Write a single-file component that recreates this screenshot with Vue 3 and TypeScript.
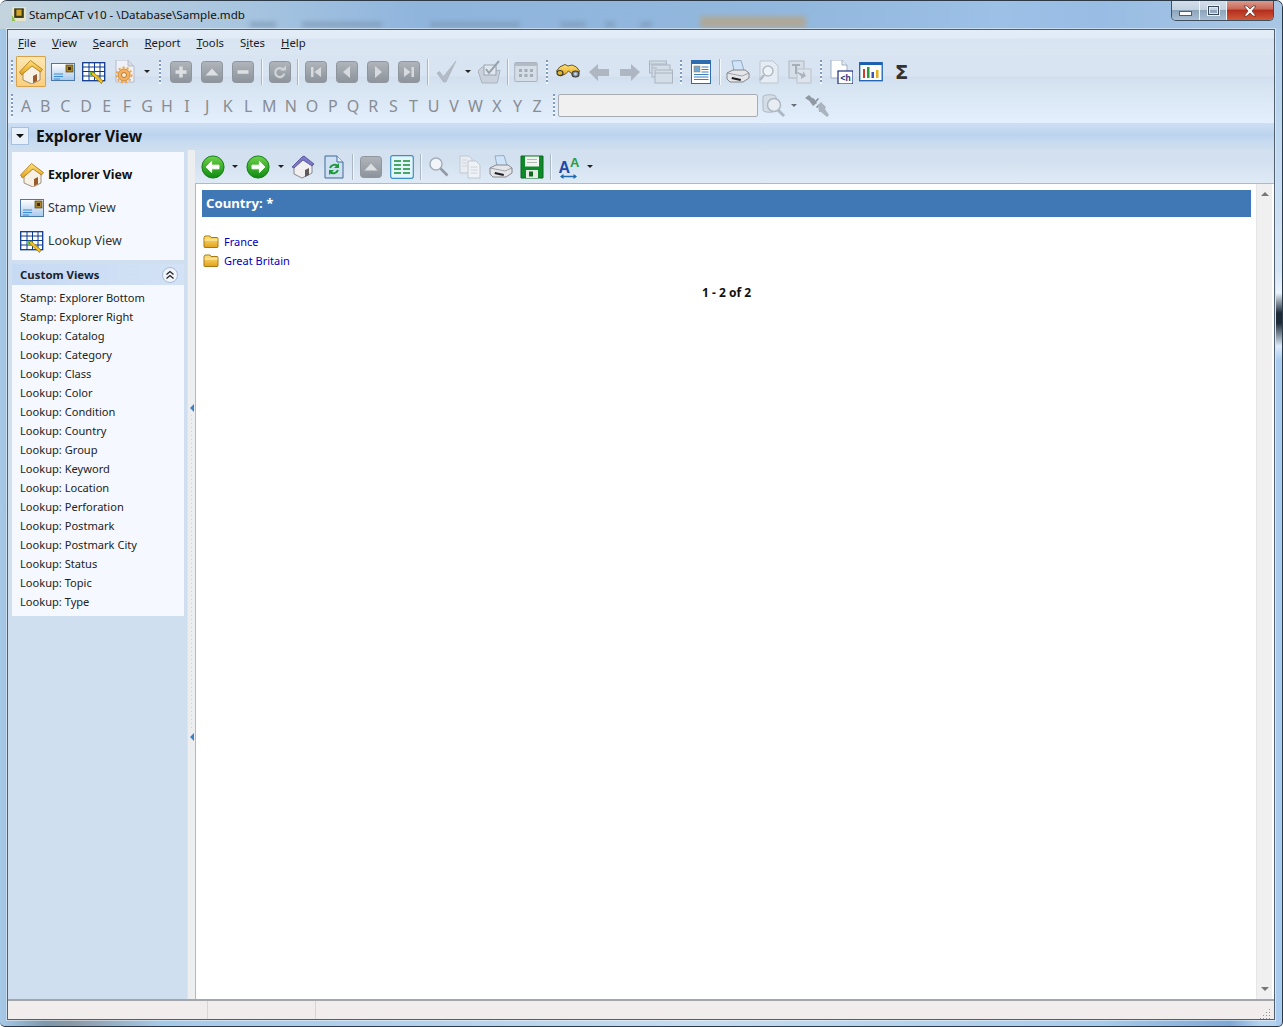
<script setup lang="ts">
type Item = { k: 'btn' | 'sep' | 'grip' | 'arrow'; i?: string; w: number; on?: boolean; sel?: boolean };
const b = (i: string, w = 31, sel = false): Item => ({ k: 'btn', i, w, sel });
const s = (w: number): Item => ({ k: 'sep', w });
const g = (w: number): Item => ({ k: 'grip', w });
const a = (w: number): Item => ({ k: 'arrow', w });

const toolbarOne: Item[] = [
  b('home', 30, true), b('stamp'), b('lookup'), b('settings'), a(14), g(11),
  b('plus'), b('up'), b('minus'), s(6), b('refresh'), s(5),
  b('first'), b('prev'), b('next'), b('last'), s(7),
  b('check'), a(12), b('checkbox'), s(5), b('calendar'), g(11),
  b('binoculars'), b('left'), b('right'), b('windows'), g(9),
  b('doc'), s(6), b('printer'), b('preview'), b('copyrep'), g(11),
  b('doch', 30), b('chart', 30), b('sigma')
];
const toolbarRight: Item[] = [
  b('back', 28), a(16), b('forward', 30), a(15), b('home2', 30), b('docsync'), s(6),
  b('up'), b('list'), s(6), b('glass'), b('copy'), b('printer'), b('save'), s(6), b('font', 34), a(6)
];
const menus = [
  { pre: '', u: 'F', post: 'ile' }, { pre: '', u: 'V', post: 'iew' }, { pre: '', u: 'S', post: 'earch' },
  { pre: '', u: 'R', post: 'eport' }, { pre: '', u: 'T', post: 'ools' }, { pre: 'S', u: 'i', post: 'tes' },
  { pre: '', u: 'H', post: 'elp' }
];
const letterWidths = [19, 19.5, 20.5, 21, 20.5, 20, 20, 20, 20, 20.5, 20.5, 20.5, 21.5, 21.5, 21, 20.5, 20, 20.5, 20, 20, 20, 21, 22, 21, 20, 19];
const letters = 'ABCDEFGHIJKLMNOPQRSTUVWXYZ'.split('').map((l, n) => ({ l, w: letterWidths[n] }));
const views = [
  { label: 'Explorer View', icon: 'home', bold: true },
  { label: 'Stamp View', icon: 'stamp', bold: false },
  { label: 'Lookup View', icon: 'lookup', bold: false }
];
const customViews = [
  'Stamp: Explorer Bottom', 'Stamp: Explorer Right', 'Lookup: Catalog', 'Lookup: Category', 'Lookup: Class',
  'Lookup: Color', 'Lookup: Condition', 'Lookup: Country', 'Lookup: Group', 'Lookup: Keyword', 'Lookup: Location',
  'Lookup: Perforation', 'Lookup: Postmark', 'Lookup: Postmark City', 'Lookup: Status', 'Lookup: Topic', 'Lookup: Type'
];
const folders = ['France', 'Great Britain'];
</script>

<template>
  <svg class="defs" aria-hidden="true">
    <defs>
      <linearGradient id="gb" x1="0" y1="0" x2="0" y2="1"><stop offset="0" stop-color="#b0b5bb" /><stop offset="1" stop-color="#8c939b" /></linearGradient>
      <linearGradient id="gg" x1="0" y1="0" x2="0" y2="1"><stop offset="0" stop-color="#6fd24a" /><stop offset="1" stop-color="#0f8a12" /></linearGradient>
      <linearGradient id="gy" x1="0" y1="0" x2="0" y2="1"><stop offset="0" stop-color="#ffe27a" /><stop offset="1" stop-color="#e2a21c" /></linearGradient>
      <linearGradient id="gs" x1="0" y1="0" x2="0" y2="1"><stop offset="0" stop-color="#ffffff" /><stop offset="1" stop-color="#a9c9ec" /></linearGradient>
    </defs>
    <symbol id="i-home" viewBox="0 0 24 24">
      <path d="M4 12v8l9 4 8-4v-9l-8-6z" fill="#f6f1e4" stroke="#8a7a60" stroke-width=".8" />
      <path d="M0.500 12 11.500 .5l12 9-2 2.500-8.500-6-10.500 9z" fill="url(#gy)" stroke="#a87412" stroke-width=".8" />
      <path d="M14 16l4-2v7l-4 2z" fill="#9a5a2a" />
    </symbol>
    <symbol id="i-stamp" viewBox="0 0 24 24">
      <rect x=".5" y="3.500" width="23" height="17" fill="url(#gs)" stroke="#4a78a8" />
      <rect x="15" y="5" width="7" height="7" fill="#a88428" stroke="#54400f" stroke-width=".7" />
      <rect x="17" y="7" width="3" height="3" fill="#3a2c0a" />
      <path d="M3 14h9M3 16.500h9M3 19h6" stroke="#3d8ed0" />
    </symbol>
    <symbol id="i-lookup" viewBox="0 0 24 24">
      <rect x=".7" y="2.700" width="22" height="18" fill="#fff" stroke="#0f3a8c" stroke-width="1.300" />
      <path d="M1 7h22M1 11.500h22M1 16h22M7 3v18M12.500 3v18M18 3v18" stroke="#0f3a8c" />
      <rect x="7.500" y="11.800" width="5" height="4" fill="#69c04a" />
      <path d="M11 12l10 9-1.500 2.500L9 14z" fill="#f2c21e" stroke="#8c6a08" stroke-width=".7" />
    </symbol>
    <symbol id="i-settings" viewBox="0 0 24 24">
      <path d="M3 0h12l6 6v16H3z" fill="#eef1f7" stroke="#b5bcc8" />
      <path d="M15 0v6h6" fill="#d5dae4" stroke="#b5bcc8" />
      <circle cx="11" cy="15" r="6" fill="#f4b05e" stroke="#d08a3a" />
      <circle cx="11" cy="15" r="7.500" fill="none" stroke="#eca556" stroke-width="2" stroke-dasharray="2.200 2" />
      <circle cx="11" cy="15" r="2.500" fill="#fbeed8" stroke="#b87a34" />
    </symbol>
    <symbol id="i-plus" viewBox="0 0 24 24"><rect x="1.500" y="1.500" width="21" height="21" rx="3" fill="url(#gb)" stroke="#8f959c" /><path d="M12 6.500v11M6.500 12h11" stroke="#dde0e3" stroke-width="3.400" /></symbol>
    <symbol id="i-up" viewBox="0 0 24 24"><rect x="1.500" y="1.500" width="21" height="21" rx="3" fill="url(#gb)" stroke="#8f959c" /><path d="M5.500 15.500 12 8.500l6.500 7z" fill="#dde0e3" /></symbol>
    <symbol id="i-minus" viewBox="0 0 24 24"><rect x="1.500" y="1.500" width="21" height="21" rx="3" fill="url(#gb)" stroke="#8f959c" /><path d="M6.500 12h11" stroke="#dde0e3" stroke-width="3.400" /></symbol>
    <symbol id="i-refresh" viewBox="0 0 24 24"><rect x="1.500" y="1.500" width="21" height="21" rx="3" fill="url(#gb)" stroke="#8f959c" /><path d="M15.500 10a4.500 4.500 0 1 0 .7 3.500" fill="none" stroke="#cfd3d8" stroke-width="2.300" /><path d="M12.500 10.500h5.500V5.500z" fill="#cfd3d8" /></symbol>
    <symbol id="i-first" viewBox="0 0 24 24"><rect x="1.500" y="1.500" width="21" height="21" rx="3" fill="url(#gb)" stroke="#8f959c" /><path d="M7 7h2.500v10H7zM17 7v10l-6.500-5z" fill="#d6d9dd" /></symbol>
    <symbol id="i-prev" viewBox="0 0 24 24"><rect x="1.500" y="1.500" width="21" height="21" rx="3" fill="url(#gb)" stroke="#8f959c" /><path d="M15 6v12l-7-6z" fill="#d6d9dd" /></symbol>
    <symbol id="i-next" viewBox="0 0 24 24"><rect x="1.500" y="1.500" width="21" height="21" rx="3" fill="url(#gb)" stroke="#8f959c" /><path d="M9 6v12l7-6z" fill="#d6d9dd" /></symbol>
    <symbol id="i-last" viewBox="0 0 24 24"><rect x="1.500" y="1.500" width="21" height="21" rx="3" fill="url(#gb)" stroke="#8f959c" /><path d="M17 7h-2.500v10H17zM7 7v10l6.500-5z" fill="#d6d9dd" /></symbol>
    <symbol id="i-check" viewBox="0 0 24 24"><path d="M2 13l2.500-1.500 4 5L21 1l-10 21H8.500z" fill="#b3bbc4" stroke="#a2abb5" stroke-width=".5" /></symbol>
    <symbol id="i-checkbox" viewBox="0 0 24 24"><path d="M4 7h14v4l4-1-2 10-1 3H4L0 11z" fill="#c9d2dc" stroke="#a9b3be" /><rect x="6" y="5" width="12" height="10" fill="#e0e7ef" stroke="#9ba6b2" /><path d="M8 9l3 4 10-12" fill="none" stroke="#97a2ae" stroke-width="2" /></symbol>
    <symbol id="i-calendar" viewBox="0 0 24 24"><rect x=".7" y="2.500" width="22.500" height="19" rx="1" fill="#d5dde6" stroke="#aab3bd" /><rect x="1" y="3" width="22" height="3" fill="#b3bcc6" /><path d="M5 9h3v3H5zM10.500 9h3v3h-3zM16 9h3v3h-3zM5 14h3v3H5zM10.500 14h3v3h-3zM16 14h3v3h-3z" fill="#a2adb9" /></symbol>
    <symbol id="i-binoculars" viewBox="0 0 24 24"><path d="M0.500 11Q3 6 9 4.500l3 1.500 4-1q5 1 7.500 6l-2 5-6-2.500-3-2.500-3 3-5 2z" fill="url(#gy)" stroke="#5a4710" stroke-width=".9" /><ellipse cx="4" cy="13" rx="3" ry="2.500" fill="#e2b52c" stroke="#3a3a34" stroke-width="1.200" /><ellipse cx="19.500" cy="14" rx="3.500" ry="3" fill="#7a8aa2" stroke="#3a3a34" stroke-width="1.200" /><circle cx="19.500" cy="14" r="1.400" fill="#ccd8ea" /></symbol>
    <symbol id="i-left" viewBox="0 0 24 24"><path d="M2 12l9-8v5h11v7H11v5z" fill="#aeb7c1" /></symbol>
    <symbol id="i-right" viewBox="0 0 24 24"><path d="M22 12l-9-8v5H2v7h11v5z" fill="#aeb7c1" /></symbol>
    <symbol id="i-windows" viewBox="0 0 24 24"><g fill="#d3dde8" stroke="#aab5c1"><rect x=".5" y="1" width="17" height="12" /><rect x="3" y="5" width="18" height="12" /><rect x="6" y="10" width="17.500" height="13" /></g><path d="M6 13h17.500M3 8h5M1 4h16" stroke="#aab5c1" /></symbol>
    <symbol id="i-doc" viewBox="0 0 24 24"><rect x="2.500" y=".5" width="19" height="23" fill="#fff" stroke="#2d6cae" /><rect x="3" y="1" width="18" height="3" fill="#2d6cae" /><rect x="5" y="6" width="6" height="6" fill="#6ea5d6" stroke="#a8884a" stroke-width=".6" /><path d="M12.500 7h7M12.500 9.500h7M12.500 12h7M5 14.500h14.500M5 17h14.500M5 19.500h14.500" stroke="#3c7fc0" /></symbol>
    <symbol id="i-printer" viewBox="0 0 24 24"><path d="M6 1l9-.5 3 10H8z" fill="#cfe4f8" stroke="#7a93ae" stroke-width=".7" /><path d="M1 13l6-3h12l4 3v5l-6 4H4l-3-3z" fill="#e4e6ea" stroke="#6e6e72" stroke-width=".8" /><path d="M1 13l15 3 7-3" fill="none" stroke="#8e9095" stroke-width=".8" /><path d="M6 17l9 2-.5 2-9-2z" fill="#1e1e22" /></symbol>
    <symbol id="i-preview" viewBox="0 0 24 24"><path d="M3 1h13l5 5v17H3z" fill="#e6ecf3" stroke="#bdc6d0" /><circle cx="11" cy="11" r="5" fill="#eef3f8" stroke="#b1bbc6" stroke-width="1.500" /><path d="M7 15l-4 5" stroke="#b1bbc6" stroke-width="2.500" /></symbol>
    <symbol id="i-copyrep" viewBox="0 0 24 24"><rect x="1" y="1" width="15" height="17" fill="#d6dee7" stroke="#aeb8c3" /><rect x="9" y="9" width="14" height="14" fill="#dde4ec" stroke="#bac3cd" /><path d="M4 4h8v2H9v8H7V6H4z" fill="#a5afba" /><path d="M7 11l8 3v-3l3 5-5 3v-3z" fill="#aab3be" /></symbol>
    <symbol id="i-chart" viewBox="0 0 24 24"><rect x=".7" y="2.700" width="22.500" height="18" fill="#fff" stroke="#1a5fb0" stroke-width="1.300" /><rect x="1" y="3" width="22" height="2" fill="#1a5fb0" /><path d="M4 9h2v9H4z" fill="#d63b2b" /><path d="M8 7h2.500v11H8z" fill="#2e9b3a" /><path d="M12.500 12H15v6h-2.500z" fill="#3c53b4" /><path d="M17 10h2.500v8H17z" fill="#e1b01c" /></symbol>
    <symbol id="i-back" viewBox="0 0 26 26"><circle cx="13" cy="13" r="12" fill="url(#gg)" stroke="#0d7a14" /><path d="M5.500 13l6-6v4h8v4h-8v4z" fill="#fff" stroke="#fff" stroke-linejoin="round" /></symbol>
    <symbol id="i-forward" viewBox="0 0 26 26"><circle cx="13" cy="13" r="12" fill="url(#gg)" stroke="#0d7a14" /><path d="M20.500 13l-6-6v4h-8v4h8v4z" fill="#fff" stroke="#fff" stroke-linejoin="round" /></symbol>
    <symbol id="i-home2" viewBox="0 0 24 24"><path d="M3 11v8l8 4 10-5v-8l-8-6z" fill="#f1efef" stroke="#6e6e78" stroke-width=".8" /><path d="M1 12 11 2l2-1 10 8-2 2-9-6-9 8z" fill="#7c79c9" stroke="#4d4a94" stroke-width=".8" /><path d="M14 15l4-2v7l-4 2z" fill="#605a5a" /></symbol>
    <symbol id="i-docsync" viewBox="0 0 24 24"><path d="M3 1h12l6 6v16H3z" fill="#cfe0f3" stroke="#3f6a9a" /><path d="M15 1v6h6" fill="#e6f0fa" stroke="#3f6a9a" /><path d="M8 13a5 5 0 0 1 8-2" fill="none" stroke="#1e9a3a" stroke-width="2" /><path d="M17 8v5h-5z" fill="#1e9a3a" /><path d="M16 15a5 5 0 0 1-8 2" fill="none" stroke="#1e9a3a" stroke-width="2" /><path d="M7 20v-5h5z" fill="#1e9a3a" /></symbol>
    <symbol id="i-list" viewBox="0 0 24 24"><rect x=".7" y=".7" width="22.600" height="22.600" rx="2" fill="#e2f5fa" stroke="#3d8fc4" stroke-width="1.200" /><path d="M4 6h7M13 6h7M4 10h7M13 10h7M4 14h7M13 14h7M4 18h7M13 18h7" stroke="#198a3a" stroke-width="1.500" /></symbol>
    <symbol id="i-glass" viewBox="0 0 24 24"><circle cx="9" cy="9" r="6" fill="#f2f6fb" stroke="#a6afb9" stroke-width="1.500" /><path d="M13.500 13.500l7 7" stroke="#8f98a3" stroke-width="2.500" /></symbol>
    <symbol id="i-copy" viewBox="0 0 24 24"><path d="M2 1h9l3 3v14H2z" fill="#e9edf2" stroke="#c0c8d1" /><path d="M10 6h8l4 4v13H10z" fill="#eef1f5" stroke="#c0c8d1" /><path d="M12.500 12h7M12.500 15h7M12.500 18h7M4 5h5M4 8h5M4 11h5" stroke="#cfd6de" /></symbol>
    <symbol id="i-save" viewBox="0 0 24 24"><path d="M1 1h22v22H1z" fill="#0f8a2a" stroke="#0a6a1e" /><rect x="5" y="1.500" width="14" height="10" fill="#f2f4f2" /><path d="M7 4.500h10M7 7.500h10" stroke="#b3bab3" /><rect x="6" y="15" width="12" height="8" fill="#e6ebe6" /><rect x="9" y="16.500" width="4" height="5" fill="#0f6a1e" /></symbol>
    <symbol id="i-dbsearch" viewBox="0 0 24 24"><path d="M1 3c0-3 13-3 13 0v13c0 3-13 3-13 0z" fill="#d5dde6" stroke="#aeb8c3" /><circle cx="12" cy="11" r="6.500" fill="#e7edf3" stroke="#aeb8c3" stroke-width="1.500" /><path d="M16 16l6 6" stroke="#aeb8c3" stroke-width="3" /></symbol>
    <symbol id="i-plug" viewBox="0 0 24 24"><path d="M0 4l4-3 3 3 2 .5L12 9l-4 3-2.500-3.500L4.500 7z" fill="#8f99a4" /><path d="M10 7l3-3 1 1-3 3zM11 13l3-3 1 1-3 3z" fill="#7f8994" /><path d="M13 11l3-3 5 5-1 2 4 6-2 2-6-5-2 0z" fill="#aab4bf" /></symbol>
    <symbol id="i-folder" viewBox="0 0 16 16"><path d="M1 3.500 2 2h5l1 1.500h6.500l.5 1V13l-.5.5h-13L1 13z" fill="url(#gy)" stroke="#a57a14" /><path d="M1.500 6h13" stroke="#fff3c0" /></symbol>
  </svg>

  <div class="window">
    <header class="titlebar">
      <span class="smudges" aria-hidden="true"></span>
      <svg class="appicon" viewBox="0 0 16 16"><rect width="16" height="16" fill="#e8e4c8" /><path d="M0 16V9l4 7z" fill="#8fc04a" /><rect x="2.500" y="1.500" width="11" height="11" fill="#3a3a1c" /><rect x="5" y="3" width="6" height="7" fill="#d2a52a" /></svg>
      <span class="apptitle">StampCAT v10 - \Database\Sample.mdb</span>
      <div class="caption">
        <span class="cap cap-min"><i></i></span>
        <span class="cap cap-max"><i></i></span>
        <span class="cap cap-close">
          <svg viewBox="0 0 14 12" width="14" height="12"><path d="M1 1h3l3 3 3-3h3L9 6l4 5h-3L7 8l-3 3H1l4-5z" fill="#fff" stroke="#5a2a24" stroke-width=".7" /></svg>
        </span>
      </div>
    </header>

    <div class="client">
      <nav class="menubar">
        <span v-for="m in menus" :key="m.u + m.post" class="menu">{{ m.pre }}<u>{{ m.u }}</u>{{ m.post }}</span>
      </nav>

      <div class="tb tb-one">
        <span class="grip grip-first"></span>
        <template v-for="(it, n) in toolbarOne" :key="n">
          <span v-if="it.k === 'btn'" class="btn" :class="{ sel: it.sel }" :style="{ width: it.w + 'px' }">
            <span v-if="it.i === 'sigma'" class="sigma">Σ</span>
            <svg v-else-if="it.i === 'doch'" class="ico" viewBox="0 0 24 24">
              <path d="M2 0h11l5 5v13H2z" fill="#fff" stroke="#9fb0c2" /><path d="M13 0v5h5" fill="#e6edf5" stroke="#9fb0c2" />
              <rect x="9" y="11" width="15" height="13" fill="#fff" stroke="#1b2f7c" stroke-width="1.200" />
              <text x="16.500" y="21" font-size="8.500" font-weight="700" text-anchor="middle" fill="#1b2f7c" font-family="Liberation Sans, sans-serif">&lt;h</text>
            </svg>
            <svg v-else class="ico"><use :href="'#i-' + it.i" /></svg>
          </span>
          <span v-else-if="it.k === 'sep'" class="slot" :style="{ width: it.w + 'px' }"><i class="sep"></i></span>
          <span v-else-if="it.k === 'grip'" class="slot" :style="{ width: it.w + 'px' }"><i class="grip"></i></span>
          <span v-else class="slot" :style="{ width: it.w + 'px' }"><i class="arrow"></i></span>
        </template>
      </div>

      <div class="tb tb-two">
        <span class="grip grip-first"></span>
        <span v-for="c in letters" :key="c.l" class="letter" :style="{ width: c.w + 'px' }">{{ c.l }}</span>
        <span class="grip grip-search"></span>
        <input class="search" type="text" />
        <svg class="ico ico-db"><use href="#i-dbsearch" /></svg>
        <i class="arrow arrow-db"></i>
        <svg class="ico ico-plug"><use href="#i-plug" /></svg>
      </div>

      <div class="viewhead">
        <span class="viewbtn"><i class="arrow arrow-dark"></i></span>
        <span class="viewtitle">Explorer View</span>
      </div>

      <main class="main">
        <aside class="side">
          <div class="panel">
            <div v-for="v in views" :key="v.label" class="view" :class="{ bold: v.bold }">
              <svg class="ico"><use :href="'#i-' + v.icon" /></svg>
              <span>{{ v.label }}</span>
            </div>
          </div>
          <div class="sechead">
            <span>Custom Views</span>
            <span class="collapse">
              <svg viewBox="0 0 10 10" width="10" height="10"><path d="M1.500 4.500 5 1.500l3.500 3M1.500 8.500 5 5.500l3.500 3" fill="none" stroke="#222" stroke-width="1.300" /></svg>
            </span>
          </div>
          <ul class="customs">
            <li v-for="c in customViews" :key="c">{{ c }}</li>
          </ul>
        </aside>

        <div class="splitter">
          <div class="handle"><i class="tri"></i><span class="dots"></span><i class="tri"></i></div>
        </div>

        <section class="pane">
          <div class="tb tb-right">
            <template v-for="(it, n) in toolbarRight" :key="n">
              <span v-if="it.k === 'btn'" class="btn" :style="{ width: it.w + 'px' }">
                <svg v-if="it.i === 'font'" class="ico" viewBox="0 0 24 24">
                  <text x="12" y="12" font-size="13" font-weight="700" fill="#2a9d3a" font-family="Liberation Sans, sans-serif">A</text>
                  <text x=".5" y="18" font-size="16" font-weight="700" fill="#1d4aa8" font-family="Liberation Sans, sans-serif">A</text>
                  <path d="M3 21.500h15" stroke="#1d6ab0" stroke-width="1.300" /><path d="M5.500 19v5L2 21.500zM15.500 19v5l3.500-2.500z" fill="#1d6ab0" />
                </svg>
                <svg v-else class="ico ico-r"><use :href="'#i-' + it.i" /></svg>
              </span>
              <span v-else-if="it.k === 'sep'" class="slot" :style="{ width: it.w + 'px' }"><i class="sep sep-r"></i></span>
              <span v-else class="slot" :style="{ width: it.w + 'px' }"><i class="arrow"></i></span>
            </template>
          </div>
          <div class="contentwrap">
            <div class="content">
              <h1 class="banner">Country: *</h1>
              <div class="folders">
                <div v-for="f in folders" :key="f" class="folder">
                  <svg class="fico"><use href="#i-folder" /></svg>
                  <a>{{ f }}</a>
                </div>
              </div>
              <p class="count">1 - 2 of 2</p>
            </div>
            <div class="scrollbar">
              <i class="sb-up"></i>
              <i class="sb-down"></i>
            </div>
          </div>
        </section>
      </main>

      <footer class="status">
        <span class="st st-a"></span>
        <span class="st st-b"></span>
        <span class="st st-c">
          <svg class="sgrip" viewBox="0 0 11 11" width="11" height="11"><path d="M9 1h1v1H9zM9 4h1v1H9zM6 4h1v1H6zM9 7h1v1H9zM6 7h1v1H6zM3 7h1v1H3zM9 10h1v1H9zM6 10h1v1H6zM3 10h1v1H3zM0 10h1v1H0z" fill="#8f9298" /></svg>
        </span>
      </footer>
    </div>
  </div>
</template>

<style>
html, body { margin: 0; background: #fff; overflow: hidden; }
</style>

<style scoped>
.defs { position: absolute; width: 0; height: 0; }
.window {
  box-sizing: border-box; width: 1283px; height: 1027px; padding: 0 7px 7px 7px; position: relative; overflow: hidden;
  border-radius: 7px 7px 5px 5px; border: 1px solid #2c3a48; border-width: 1px 1px 1px 0;
  font-family: "Noto Sans", "Liberation Sans", sans-serif; font-size: 11.200px; color: #1c1c1c;
  background:
    linear-gradient(180deg, #a9c9e8 0, #d6e6f6 270px, #eaf3fc 292px, #1d2a38 312px, #1d2a38 322px, #dcebfa 345px, #a8cbee 360px, #a8cbee 100%) right top / 6px 100% no-repeat,
    linear-gradient(90deg, #a7c9e8 0, #7e98ad 45px, #8a98a4 70px, #a7c9e8 160px, #b3d0ec 400px, #c5dcf0 700px, #a9cbeb 1100px, #7ea8d6 1230px, #b4d2ee 1260px);
}
.titlebar { height: 28px; margin: 0 -7px; padding: 0 0 2px 12px; box-sizing: border-box; display: flex; align-items: center; position: relative;
  background: linear-gradient(90deg, #c3d4dd 0, #a9c6e0 230px, #8fb5dd 420px, #92b8de 800px, #9cc0e6 1000px, #98bce3 1100px, #a9c7e4 1283px); }
.smudges { position: absolute; left: 240px; top: 12px; width: 600px; height: 16px; filter: blur(2.500px); opacity: .85;
  background:
    linear-gradient(#b3a68f, #b3a68f) 460px 3px / 106px 12px no-repeat,
    linear-gradient(#7f9ab8, #7f9ab8) 10px 9px / 26px 5px no-repeat,
    linear-gradient(#7f9ab8, #7f9ab8) 62px 9px / 80px 5px no-repeat,
    linear-gradient(#7f9ab8, #7f9ab8) 190px 9px / 90px 5px no-repeat,
    linear-gradient(#7f9ab8, #7f9ab8) 320px 9px / 26px 5px no-repeat,
    linear-gradient(#7f9ab8, #7f9ab8) 365px 9px / 10px 5px no-repeat,
    linear-gradient(#7f9ab8, #7f9ab8) 400px 9px / 12px 5px no-repeat; }
.appicon { width: 14px; height: 14px; margin-right: 3px; position: relative; }
.apptitle { font-size: 11.600px; color: #111; position: relative; }
.caption { position: absolute; right: 8px; top: 0; height: 19px; display: flex; border: 1px solid #3e4f60; border-top: 0; border-radius: 0 0 5px 5px; overflow: hidden; }
.cap { display: flex; align-items: center; justify-content: center; height: 19px; background: linear-gradient(180deg, #d3dee9 0, #c3d2e0 45%, #8ea4bb 50%, #a9bfd4 100%); border-right: 1px solid #eef4fa; }
.cap-min { width: 27px; } .cap-max { width: 26px; }
.cap-min i { width: 11px; height: 3px; background: #fff; border: 1px solid #50606f; margin-top: 6px; }
.cap-max i { width: 9px; height: 7px; border: 1px solid #3a4755; box-shadow: inset 0 0 0 1px #dfe8f0, 0 0 0 1px #eaf0f6; }
.cap-close { width: 46px; border: 0; background: linear-gradient(180deg, #dc9a8c 0, #ca6a58 40%, #b52f1e 50%, #cf5a3a 100%); }

.client { box-sizing: border-box; height: 991px; display: flex; flex-direction: column; border: 1px solid #50606f; box-shadow: 0 0 0 1px rgba(255,255,255,.45); background: #d5e2f0; overflow: hidden; position: relative; }
.menubar { height: 25px; flex: none; display: flex; align-items: center; padding-left: 10px; gap: 16px; box-sizing: border-box; padding-bottom: 1px;
  background: linear-gradient(180deg, #e3edf8 0, #e1ebf6 8px, #d8e4f1 9px, #dae6f2 100%); }
.menu { font-size: 11.300px; white-space: nowrap; }
.tb { display: flex; align-items: center; box-sizing: border-box; flex: none; }
.tb-one { height: 33px; padding-left: 3px; background: linear-gradient(180deg, #d8e4f1 0, #d8e4f1 21px, #d2dfee 22px, #d7e4f2 100%); }
.tb-two { height: 35px; padding-left: 3px; background: linear-gradient(180deg, #d7e4f2 0, #e3effc 100%); }
.btn { display: flex; align-items: center; justify-content: center; height: 31px; box-sizing: border-box; flex: none; }
.btn.sel { background: linear-gradient(180deg, #fde6b0, #fbcf7e); border: 1px solid #d9a24a; margin-right: 1px; border-radius: 1px; }
.ico { width: 24px; height: 24px; flex: none; }
.ico-r { width: 24px; height: 24px; }
.slot { display: flex; align-items: center; justify-content: center; height: 31px; flex: none; }
.sep { display: block; width: 1px; height: 26px; background: #a8b6c6; box-shadow: 1px 0 0 #f2f7fc; }
.grip { display: block; width: 2px; height: 24px; background: repeating-linear-gradient(180deg, #7e9cc2 0 2px, #f4f8fd 2px 4px); flex: none; }
.grip-first { margin-right: 3px; }
.arrow { display: block; width: 0; height: 0; border: 3px solid transparent; border-top: 3px solid #222; border-bottom: 0; }
.sigma { font: 700 20px "DejaVu Sans", "Liberation Sans", sans-serif; color: #333; line-height: 1; }
.letter { font-size: 16px; color: #888d94; text-align: center; line-height: 20px; flex: none; }
.tb-two .grip-first { margin-right: 3.500px; }
.grip-search { margin-left: 6.500px; margin-right: 3px; }
.search { box-sizing: border-box; width: 200px; height: 23px; border: 1px solid #a9adb3; border-radius: 2px; background: #f0f0f0; margin: 0; padding: 0; flex: none; }
.ico-db { margin-left: 4px; }
.arrow-db { border-top-color: #6a6f75; margin-left: 5px; }
.ico-plug { margin-left: 8px; }

.viewhead { height: 27px; display: flex; align-items: center; padding: 0 0 1px 3px; box-sizing: border-box; flex: none;
  background: linear-gradient(180deg, #cddff3 0, #bcd3ef 12px, #c6daf0 18px, #cfdfef 100%); }
.viewbtn { width: 18px; height: 18px; box-sizing: border-box; border: 1px solid #a7c0dd; background: #e8f0fa; display: flex; align-items: center; justify-content: center; margin-right: 7px; }
.arrow-dark { border-width: 4px 4px 0 4px; border-top-color: #111; }
.viewtitle { font-size: 15.600px; font-weight: 700; color: #111; }

.main { flex: 1; display: flex; min-height: 0; }
.side { width: 179px; flex: none; padding: 2px 3px 0 4px; box-sizing: border-box; background: #cfdff0; display: flex; flex-direction: column; }
.panel { height: 108px; background: #f5f9ff; padding-top: 6px; box-sizing: border-box; flex: none; }
.view { height: 33px; display: flex; align-items: center; gap: 4px; padding-left: 8px; font-size: 12.400px; color: #333; }
.view.bold { font-weight: 700; color: #111; }
.sechead { margin-top: 4px; height: 21px; display: flex; align-items: center; justify-content: space-between; padding: 0 6px 0 8px; box-sizing: border-box; background: linear-gradient(90deg, #c7daf3, #d3e2f5); font-weight: 700; font-size: 11.400px; color: #1a2330; flex: none; }
.collapse { width: 14px; height: 14px; border: 1px solid #a6bcd8; border-radius: 50%; background: #f0f5fc; display: flex; align-items: center; justify-content: center; }
.customs { list-style: none; margin: 0; padding: 3px 0 5px 8px; background: #f5f9ff; }
.customs li { height: 19px; line-height: 19px; font-size: 11.100px; color: #222; white-space: nowrap; }

.splitter { width: 8px; flex: none; background: #eceef0; position: relative; display: flex; justify-content: center; padding-top: 254px; box-sizing: border-box; border-left: 1px solid #d9e4f0; }
.handle { height: 337px; width: 5px; display: flex; flex-direction: column; align-items: center; justify-content: space-between; }
.tri { display: block; width: 0; height: 0; border: 4px solid transparent; border-left: 0; border-right: 4px solid #3f82c4; }
.dots { flex: 1; width: 1px; background: repeating-linear-gradient(180deg, #c9d4de 0 1px, transparent 1px 4px); margin: 3px 0; }

.pane { flex: 1; min-width: 0; display: flex; flex-direction: column; }
.tb-right { height: 33px; padding-left: 4px; background: linear-gradient(180deg, #d2e0ef 0, #d2e0ef 10px, #dfeaf6 100%); flex: none; }
.contentwrap { flex: 1; min-height: 0; display: flex; border: 1px solid #b4b9c1; border-right: 0; border-bottom: 0; background: #fff; }
.content { flex: 1; min-width: 0; padding: 6px 5px 0 6px; }
.banner { margin: 0; height: 27px; background: #3f78b5; color: #fff; font-size: 13.200px; font-weight: 700; line-height: 27px; padding-left: 4px; }
.folders { margin-top: 15px; }
.folder { height: 19px; display: flex; align-items: center; gap: 5px; padding-left: 1px; }
.fico { width: 16px; height: 16px; flex: none; }
.folder a { color: #0000c0; font-size: 11px; }
.count { margin: 14px 0 0; text-align: center; font-weight: 700; font-size: 12px; color: #111; }
.scrollbar { width: 16px; flex: none; margin-right: 2px; background: #f0f0f0; border-left: 1px solid #e6e6e6; display: flex; flex-direction: column; justify-content: space-between; align-items: center; padding: 8px 0; box-sizing: border-box; }
.sb-up { display: block; width: 0; height: 0; border: 4px solid transparent; border-top: 0; border-bottom: 4px solid #777; }
.sb-down { display: block; width: 0; height: 0; border: 4px solid transparent; border-bottom: 0; border-top: 4px solid #777; }

.status { height: 20px; flex: none; border-top: 2px solid #a3a6aa; background: #f0edec; display: flex; box-sizing: border-box; }
.st { display: block; height: 100%; border-right: 1px solid #d8d6d4; }
.st-a { width: 199px; } .st-b { width: 107px; }
.st-c { flex: 1; border: 0; position: relative; display: flex; justify-content: flex-end; align-items: flex-end; padding: 0 3px 2px 0; }
.sgrip { display: block; }
</style>
